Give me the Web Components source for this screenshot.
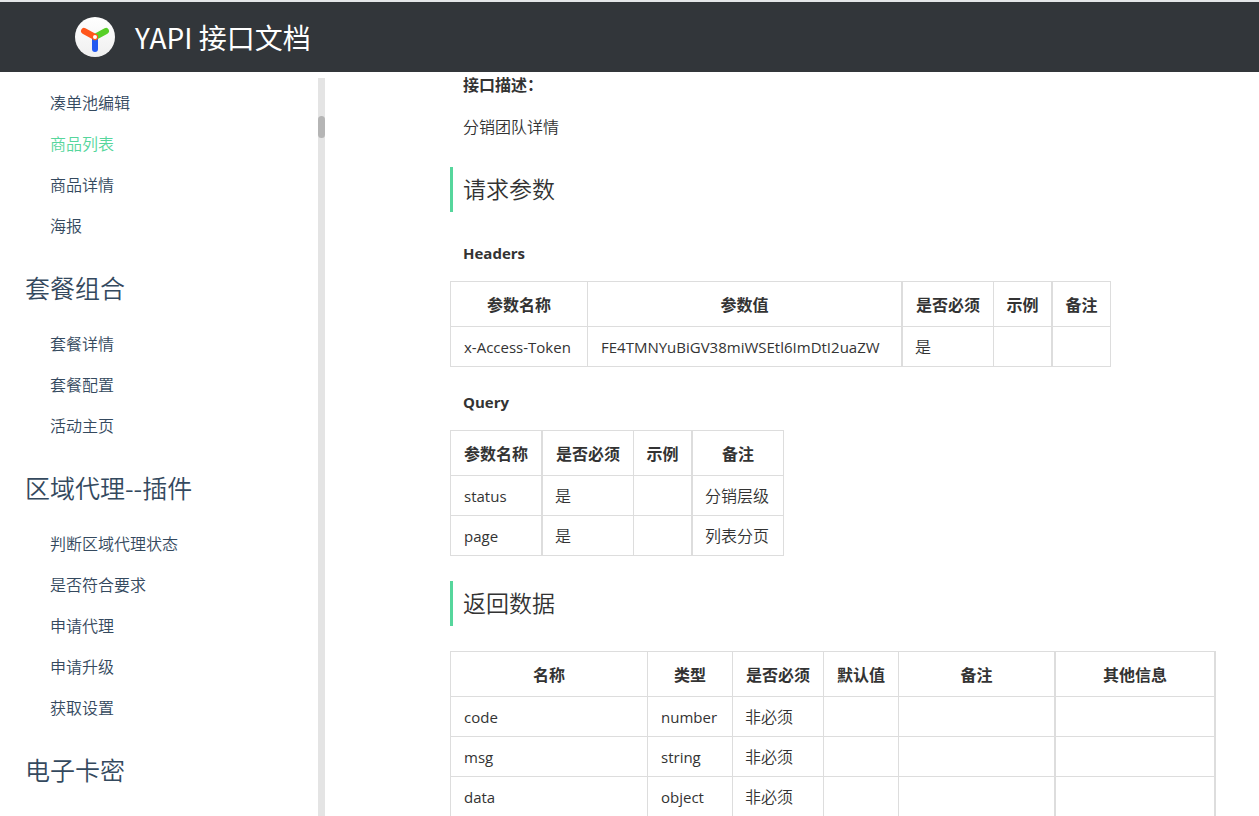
<!DOCTYPE html>
<html lang="zh-CN">
<head>
<meta charset="utf-8">
<title>YAPI 接口文档</title>
<style>
html, body { height: 100%; }
body { margin: 0; overflow: hidden; background: #fff; color: #333;
  font-family: "Open Sans", "Noto Sans CJK SC", sans-serif; font-size: 16px; line-height: 24px; }
</style>
</head>
<body>
<api-page>
  <api-header slot="header">YAPI 接口文档</api-header>
  <api-sidebar slot="sidebar">
    <nav-item>凑单池编辑</nav-item>
    <nav-item active>商品列表</nav-item>
    <nav-item>商品详情</nav-item>
    <nav-item>海报</nav-item>
    <nav-group>套餐组合</nav-group>
    <nav-item>套餐详情</nav-item>
    <nav-item>套餐配置</nav-item>
    <nav-item>活动主页</nav-item>
    <nav-group>区域代理--插件</nav-group>
    <nav-item>判断区域代理状态</nav-item>
    <nav-item>是否符合要求</nav-item>
    <nav-item>申请代理</nav-item>
    <nav-item>申请升级</nav-item>
    <nav-item>获取设置</nav-item>
    <nav-group>电子卡密</nav-group>
  </api-sidebar>
  <api-content></api-content>
</api-page>
<script>
function define(name, html, init) {
  const template = document.createElement('template');
  template.innerHTML = html;
  customElements.define(name, class extends HTMLElement {
    constructor() {
      super();
      this.attachShadow({ mode: 'open' }).append(template.content.cloneNode(true));
    }
    connectedCallback() { if (init) init(this, this.shadowRoot); }
  });
}

define('api-page', `
<style>
:host { display: flex; flex-direction: column; height: 100vh; }
.body { flex: 1; min-height: 0; display: grid; grid-template-columns: 325px minmax(0, 1fr); }
main { overflow: hidden; padding: 1px 43px 0 125px; }
</style>
<slot name="header"></slot>
<div class="body"><slot name="sidebar"></slot><main><slot></slot></main></div>`);

define('api-header', `
<style>
:host { display: block; flex: none; border-top: 2px solid #e4e6e8; background: #32363a; color: #fff; }
header { display: flex; align-items: center; gap: 20px; height: 70px; padding-left: 75px; }
svg { display: block; }
h1 { margin: 0; font-size: 28px; line-height: 40px; font-weight: 400; font-family: "Noto Sans CJK SC", sans-serif; }
</style>
<header>
<svg width="40" height="40" viewBox="0 0 40 40" aria-hidden="true">
  <defs><linearGradient id="g" x1="0" y1="0" x2="0" y2="1"><stop offset="0" stop-color="#fff"/><stop offset="1" stop-color="#efefef"/></linearGradient></defs>
  <circle cx="20" cy="20" r="20" fill="url(#g)"/>
  <g fill="none" stroke-width="6" stroke-linecap="round">
    <path d="M20 20V32" stroke="#2359f1"/>
    <path d="M20 20L31 14" stroke="#57cf27"/>
    <path d="M20 20L9 14" stroke="#ff561b"/>
  </g>
  <circle cx="20" cy="20" r="3" fill="#ff561b"/>
  <circle cx="20" cy="20" r="2" fill="#fff"/>
</svg>
<h1><slot></slot></h1>
</header>`);

define('api-sidebar', `
<style>
:host { display: flex; justify-content: space-between; min-height: 0; padding-top: 6px; overflow: hidden; font-family: "Noto Sans CJK SC", sans-serif; }
nav { flex: 1; padding-top: 4px; overflow: hidden; }
.track { flex: none; width: 7px; padding-top: 38px; background: #e4e4e4; }
.thumb { height: 22px; border-radius: 4px; background: #b5b5b5; }
</style>
<nav><slot></slot></nav>
<div class="track"><div class="thumb"></div></div>`);

define('nav-item', `
<style>
:host { display: block; padding-left: 50px; line-height: 41px; color: #34495e; font-weight: 350; }
:host([active]) { color: #56d69c; }
a { color: inherit; text-decoration: none; }
</style>
<a href="#"><slot></slot></a>`);

define('nav-group', `
<style>
:host { display: block; padding: 21px 0 15px 25px; color: #34495e; }
h2 { margin: 0; font-size: 25px; line-height: 41px; font-weight: 350; }
a { color: inherit; text-decoration: none; }
</style>
<h2><a href="#"><slot></slot></a></h2>`);

define('api-content', `
<style>
:host { display: block; }
p, h3 { margin: 0; padding-left: 13px; font-size: 16px; line-height: 24px; }
p { margin-bottom: 18px; font-weight: 350; }
b { font-weight: 700; }
h2 { margin: 28px 0 25px; padding-left: 10px; border-left: 3px solid #56d69c; font-size: 23px; line-height: 45px; font-weight: 350; }
h3 { margin: 23px 0 16px; font-size: 15px; }
h2 + h3 { margin-top: 29px; }
api-table + h2 { margin-top: 25px; }
</style>
<p><b>接口描述：</b></p>
<p>分销团队详情</p>
<h2>请求参数</h2>
<h3>Headers</h3>
<api-table label="Headers" columns="参数名称:137|参数值:315:2|是否必须:91|示例:59:2|备注:58"
  rows="x-Access-Token|FE4TMNYuBiGV38miWSEtl6ImDtI2uaZW|是||"></api-table>
<h3>Query</h3>
<api-table label="Query" columns="参数名称:92:2|是否必须:91|示例:59:2|备注:91"
  rows="status|是||分销层级;page|是||列表分页"></api-table>
<h2>返回数据</h2>
<api-table fill label="返回数据" columns="名称:197|类型:85|是否必须:91|默认值:75|备注:157:2|其他信息:160:2"
  rows="code|number|非必须|||;msg|string|非必须|||;data|object|非必须|||"></api-table>`);

define('api-table', `
<style>
:host { display: block; }
table { border-collapse: separate; border-spacing: 0; table-layout: fixed; border: solid #ddd; border-width: 1px 0 0 1px; }
:host([fill]) table { width: 100%; }
th, td { box-sizing: border-box; border: solid #ddd; border-width: 0 1px 1px 0; padding: 0 12px; white-space: nowrap; }
.wide { border-right-width: 2px; }
th { height: 45px; padding: 2px 0 0; font-size: 16px; font-weight: 700; text-align: center; }
td { height: 40px; font-size: 15px; font-weight: 400; }
td:lang(en) { padding-left: 13px; padding-right: 0; }
td:lang(zh) { font-size: 16px; font-weight: 350; }
</style>
<table><colgroup></colgroup><thead><tr></tr></thead><tbody></tbody></table>`, (host, root) => {
  const columns = host.getAttribute('columns').split('|').map(c => c.split(':'));
  const total = columns.reduce((sum, c) => sum + Number(c[1]), 1);
  const table = root.querySelector('table');
  table.setAttribute('aria-label', host.getAttribute('label'));
  if (!host.hasAttribute('fill')) table.style.width = total + 'px';
  const make = (tag, text, column) => {
    const cell = document.createElement(tag);
    cell.textContent = text;
    cell.lang = /[a-z]/i.test(text) ? 'en' : 'zh';
    if (column[2]) cell.className = 'wide';
    return cell;
  };
  for (const c of columns) {
    const col = document.createElement('col');
    col.style.width = c[1] + 'px';
    root.querySelector('colgroup').append(col);
    const th = make('th', c[0], c);
    th.scope = 'col';
    root.querySelector('thead tr').append(th);
  }
  for (const row of host.getAttribute('rows').split(';')) {
    const tr = document.createElement('tr');
    row.split('|').forEach((text, i) => tr.append(make('td', text, columns[i])));
    root.querySelector('tbody').append(tr);
  }
});
</script>
</body>
</html>
